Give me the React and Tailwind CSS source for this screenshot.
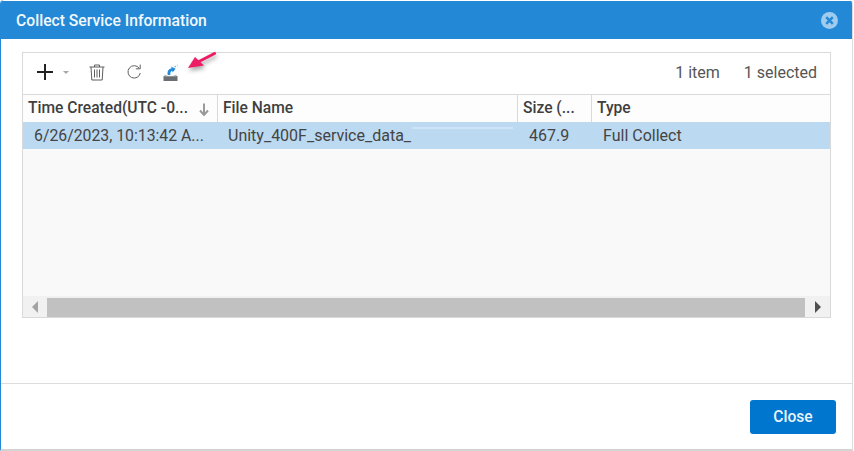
import React from "react";

const font = { fontFamily: "Roboto, sans-serif" };

function Plus() {
  return (
    <svg width="16" height="16" viewBox="0 0 16 16" className="block">
      <path d="M8 0V16M0 8H16" stroke="#222" strokeWidth="2" fill="none" />
    </svg>
  );
}

function Trash() {
  return (
    <svg width="16" height="17" viewBox="0 0 16 17" className="block" fill="none" stroke="#5f5f5f" strokeWidth="1">
      <path d="M0.5 3H15.5M5.5 3V1H10.5V3" />
      <path d="M2 3L2.8 16H13.2L14 3" />
      <path d="M5.5 5.5V13.5M8 5.5V13.5M10.5 5.5V13.5" />
    </svg>
  );
}

function Refresh() {
  return (
    <svg width="16" height="16" viewBox="0 0 16 16" className="block" fill="none" stroke="#5f5f5f" strokeWidth="1">
      <path d="M13.2 4.2A6.2 6.2 0 1 0 14.3 9" />
      <path d="M9.8 4.8H14.2V0.6" />
    </svg>
  );
}

function Collect() {
  return (
    <svg width="15" height="17" viewBox="0 0 15 17" className="block">
      <rect x="0.5" y="12" width="14" height="5" fill="#6b6f73" />
      <path d="M1.5 10.5Q7.5 13.5 13.5 10.5V12.5H1.5Z" fill="#b5b5b5" />
      <path d="M4.8 11C3.8 7.2 6 4.6 8.8 4.2L8 2.4L12.6 4.8L9.6 8.6L9.2 6.8C7.8 7.4 7 8.8 7.4 11Z" fill="#1f8ade" />
      <circle cx="12.2" cy="2.6" r="0.8" fill="#5db2ea" />
      <circle cx="14.2" cy="1.2" r="0.6" fill="#8cc8f0" />
    </svg>
  );
}

function Arrow() {
  return (
    <svg
      width="34"
      height="24"
      viewBox="0 0 34 24"
      className="absolute left-[186px] top-[50px] drop-shadow-[1px_3px_2px_rgba(0,0,0,0.35)]"
    >
      <path d="M28.5 3.5L12 12" stroke="#ee1c64" strokeWidth="3" strokeLinecap="round" fill="none" />
      <path d="M2 18L9 7L18 15.5Z" fill="#ee1c64" />
    </svg>
  );
}

function CloseCircle() {
  return (
    <svg width="17" height="17" viewBox="0 0 17 17" className="block">
      <circle cx="8.5" cy="8.5" r="8.5" fill="#9fcbee" />
      <path d="M5.2 5.2L11.8 11.8M11.8 5.2L5.2 11.8" stroke="#2389d6" strokeWidth="2.4" />
    </svg>
  );
}

function HeaderCell({ className, children }) {
  return (
    <div className={`flex h-full shrink-0 items-center border-r border-[#d9d9d9] pl-[5px] pt-[1px] text-[15.6px] font-medium text-[#3f3f3f] ${className}`}>
      {children}
    </div>
  );
}

export default function App() {
  return (
    <div className="relative h-[451px] w-[854px] overflow-hidden bg-white" style={font}>
      <div className="flex h-[451px] w-[853px] flex-col overflow-hidden rounded-t-[4px] border-b-2 border-l border-r border-b-[#d4d4d4] border-l-[#2389d6] border-r-[#dedede] pt-[1px]">
        <div className="flex h-[38px] shrink-0 items-center justify-between bg-[#2389d6] pl-[15px] pr-[14px]">
          <span className="pt-[1px] text-[15.7px] font-medium text-[#f2f8fd]">Collect Service Information</span>
          <CloseCircle />
        </div>

        <div className="flex-1 pl-[21px] pt-[13px]">
          <div className="flex h-[266px] w-[809px] flex-col border border-[#d9d9d9]">
            <div className="flex h-[42px] shrink-0 items-center justify-between border-b border-[#d9d9d9] bg-white pl-[14px] pr-[13px]">
              <div className="mb-[3px] flex items-center">
                <Plus />
                <svg width="6" height="3" viewBox="0 0 6 3" className="ml-[10px] block">
                  <path d="M0 0H6L3 3Z" fill="#a8a8a8" />
                </svg>
                <span className="ml-[20px]"><Trash /></span>
                <span className="ml-[21px]"><Refresh /></span>
                <span className="ml-[21px]"><Collect /></span>
              </div>
              <div className="mb-[1px] flex items-center gap-[24px] text-[16px] text-[#555555]">
                <span>1 item</span>
                <span>1 selected</span>
              </div>
            </div>

            <div className="flex h-[27px] shrink-0 items-center bg-[#fdfdfd]">
              <HeaderCell className="w-[195px] justify-between pr-[8px]">
                <span className="whitespace-nowrap">Time Created(UTC -0...</span>
                <svg width="10" height="13" viewBox="0 0 10 13" className="block">
                  <path d="M5 0.5V11M1 7.5L5 12L9 7.5" stroke="#9a9a9a" strokeWidth="2" fill="none" />
                </svg>
              </HeaderCell>
              <HeaderCell className="w-[300px]">File Name</HeaderCell>
              <HeaderCell className="w-[74px]">Size (...</HeaderCell>
              <div className="pl-[5px] pt-[1px] text-[15.6px] font-medium text-[#3f3f3f]">Type</div>
            </div>

            <div className="flex h-[27px] shrink-0 items-center bg-[#bbd9f1] text-[16px] text-[#444444]">
              <div className="w-[195px] shrink-0 whitespace-nowrap pl-[11px] text-[15.8px]">6/26/2023, 10:13:42 A...</div>
              <div className="relative w-[300px] shrink-0 pl-[10px]">
                Unity_400F_service_data_
                <span className="absolute left-[194px] top-[3px] h-[2px] w-[101px] bg-[#cfe4f6]" />
              </div>
              <div className="w-[74px] shrink-0 pl-[11px]">467.9</div>
              <div className="pl-[11px]">Full Collect</div>
            </div>

            <div className="flex-1 bg-[#f9f9f9]" />

            <div className="flex h-[21px] shrink-0 items-stretch bg-[#f1f1f1]">
              <div className="flex w-[24px] shrink-0 items-center justify-center">
                <svg width="6" height="12" viewBox="0 0 6 12" className="block">
                  <path d="M6 0V12L0 6Z" fill="#a3a3a3" />
                </svg>
              </div>
              <div className="mt-[2px] w-[758px] shrink-0 bg-[#c1c1c1]" />
              <div className="flex flex-1 items-center justify-center">
                <svg width="6" height="12" viewBox="0 0 6 12" className="block">
                  <path d="M0 0V12L6 6Z" fill="#505050" />
                </svg>
              </div>
            </div>
          </div>
        </div>

        <div className="flex h-[66px] shrink-0 items-center justify-end border-t border-[#dcdcdc] pr-[16px]">
          <button className="mt-[1px] h-[34px] w-[86px] rounded-[3px] bg-[#0076ce] pt-[1px] text-[15.6px] font-medium text-[#e9f3fb]">
            Close
          </button>
        </div>
      </div>
      <Arrow />
    </div>
  );
}
